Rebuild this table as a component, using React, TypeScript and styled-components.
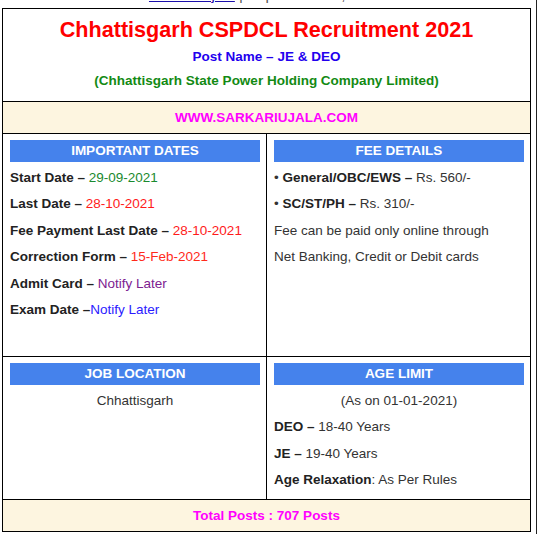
import React from 'react';
import styled, { createGlobalStyle } from 'styled-components';

const GlobalStyle = createGlobalStyle`
  html, body {
    margin: 0;
    padding: 0;
    background: #ffffff;
    font-family: "Liberation Sans", Arial, sans-serif;
    overflow: hidden;
  }
`;

const Page = styled.div`
  width: 537px;
  height: 534px;
  border-right: 1px solid #222;
  box-sizing: border-box;
  overflow: hidden;
`;

const Meta = styled.div`
  margin-top: -14px;
  height: 18px;
  line-height: 18px;
  margin-bottom: 4px;
  text-align: center;
  font-size: 15px;
  color: #555;
  padding-right: 4px;

  a {
    color: #1a0dab;
    text-decoration: underline;
  }
`;

const Table = styled.div`
  margin-left: 2px;
  width: 529px;
  border: 1px solid #000;
  box-sizing: border-box;
`;

const TitleRow = styled.div`
  padding: 6px 0 8px;
  text-align: center;
  font-weight: bold;
`;

const Title = styled.div`
  font-size: 21.6px;
  line-height: 30px;
  color: #ff0000;
`;

const SubTitle = styled.div<{ $color: string }>`
  font-size: 13.5px;
  line-height: 24px;
  color: ${({ $color }) => $color};
`;

const Banner = styled.div`
  border-top: 1px solid #000;
  background: #fdf5e0;
  height: 31px;
  line-height: 31px;
  text-align: center;
  font-size: 13.5px;
  font-weight: bold;
  color: #ff00ff;
`;

const Row = styled.div`
  display: grid;
  grid-template-columns: 263px 263px;
  column-gap: 1px;
  background: #000;
  border-top: 1px solid #000;
`;

const Cell = styled.div`
  background: #fff;
  padding: 6px 6px 6px 7px;
  font-size: 13.5px;
  color: #333;
`;

const CellHead = styled.div`
  background: #4582ec;
  color: #fff;
  height: 22px;
  line-height: 22px;
  text-align: center;
  font-weight: bold;
  font-size: 13.5px;
  margin-bottom: 3px;
`;

const Line = styled.div<{ $center?: boolean }>`
  line-height: 26.4px;
  height: 26.4px;
  white-space: nowrap;
  text-align: ${({ $center }) => ($center ? 'center' : 'left')};
`;

const Label = styled.b`
  color: #222;
`;

const Value = styled.span<{ $color: string }>`
  color: ${({ $color }) => $color};
`;

const dates = [
  { label: 'Start Date – ', value: '29-09-2021', color: '#1a8a2e' },
  { label: 'Last Date – ', value: '28-10-2021', color: '#ff1a1a' },
  { label: 'Fee Payment Last Date – ', value: '28-10-2021', color: '#ff1a1a' },
  { label: 'Correction Form – ', value: '15-Feb-2021', color: '#ff2a1a' },
  { label: 'Admit Card – ', value: 'Notify Later', color: '#7d2191' },
  { label: 'Exam Date –', value: 'Notify Later', color: '#2a1aff' },
];

export default function App() {
  return (
    <Page>
      <GlobalStyle />
      <Meta>
        <a href="#">Sarkari Ujala</a> | September 29, 2021
      </Meta>
      <Table>
        <TitleRow>
          <Title>Chhattisgarh CSPDCL Recruitment 2021</Title>
          <SubTitle $color="#2200ee">Post Name – JE &amp; DEO</SubTitle>
          <SubTitle $color="#138a13">(Chhattisgarh State Power Holding Company Limited)</SubTitle>
        </TitleRow>
        <Banner>WWW.SARKARIUJALA.COM</Banner>
        <Row>
          <Cell>
            <CellHead>IMPORTANT DATES</CellHead>
            {dates.map((d) => (
              <Line key={d.label + d.value}>
                <Label>{d.label}</Label>
                <Value $color={d.color}>{d.value}</Value>
              </Line>
            ))}
            <Line />
          </Cell>
          <Cell>
            <CellHead>FEE DETAILS</CellHead>
            <Line>
              • <Label>General/OBC/EWS –</Label> Rs. 560/-
            </Line>
            <Line>
              • <Label>SC/ST/PH –</Label> Rs. 310/-
            </Line>
            <Line>Fee can be paid only online through</Line>
            <Line>Net Banking, Credit or Debit cards</Line>
          </Cell>
        </Row>
        <Row>
          <Cell>
            <CellHead>JOB LOCATION</CellHead>
            <Line $center>Chhattisgarh</Line>
          </Cell>
          <Cell>
            <CellHead>AGE LIMIT</CellHead>
            <Line $center>(As on 01-01-2021)</Line>
            <Line>
              <Label>DEO –</Label> 18-40 Years
            </Line>
            <Line>
              <Label>JE –</Label> 19-40 Years
            </Line>
            <Line>
              <Label>Age Relaxation</Label>: As Per Rules
            </Line>
          </Cell>
        </Row>
        <Banner>Total Posts : 707 Posts</Banner>
      </Table>
    </Page>
  );
}
